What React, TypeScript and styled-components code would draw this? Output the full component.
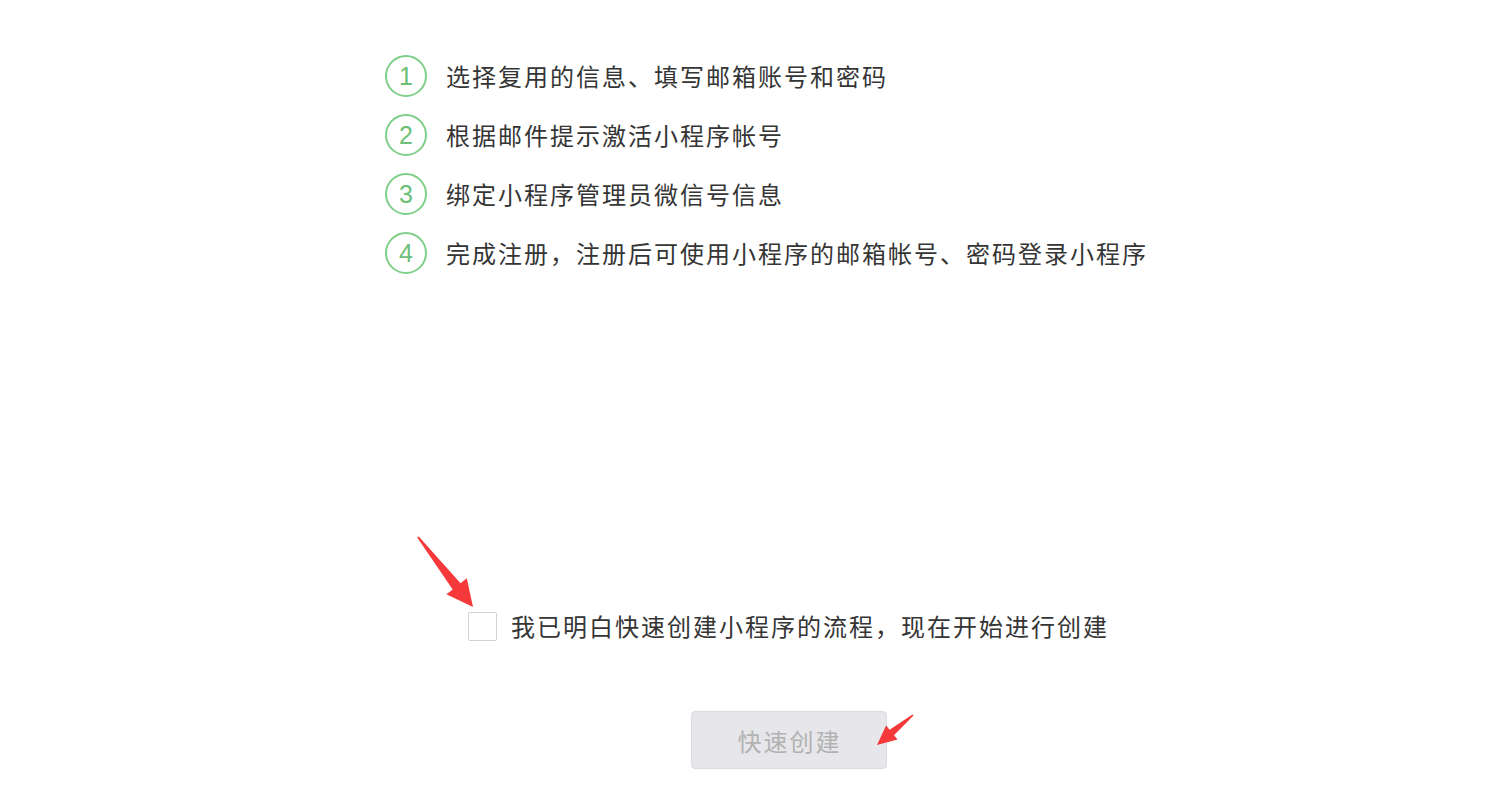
import React from "react";
import styled, { createGlobalStyle } from "styled-components";

const GlobalStyle = createGlobalStyle`
  html, body {
    margin: 0;
    padding: 0;
    background: #fff;
  }
  body {
    font-family: "Noto Sans CJK SC", "Noto Sans", sans-serif;
    color: #353535;
  }
`;

const Page = styled.div`
  position: relative;
  width: 1490px;
  height: 787px;
  overflow: hidden;
  background: #fff;
`;

const Content = styled.div`
  display: flex;
  flex-direction: column;
  width: 805px;
  margin-left: 385px;
  padding-top: 55px;
`;

const Steps = styled.ol`
  list-style: none;
  margin: 0;
  padding: 0;
  display: flex;
  flex-direction: column;
  gap: 17px;
`;

const Step = styled.li`
  display: flex;
  align-items: center;
  gap: 19px;
  height: 42px;
`;

const Num = styled.span`
  display: flex;
  align-items: center;
  justify-content: center;
  box-sizing: border-box;
  width: 42px;
  height: 42px;
  border: 2px solid #7fcf89;
  border-radius: 50%;
  color: #6cbf78;
  font-family: "Liberation Sans", Arial, sans-serif;
  font-size: 25px;
`;

const Label = styled.span`
  font-size: 24px;
  letter-spacing: 2px;
  line-height: 42px;
  color: #353535;
`;

const Agree = styled.label`
  display: flex;
  align-items: center;
  justify-content: center;
  gap: 14px;
  margin-top: 331px;
  padding-left: 2px;
  cursor: pointer;
`;

const Box = styled.span`
  box-sizing: border-box;
  width: 29px;
  height: 29px;
  border: 1px solid #d2d2d2;
  border-radius: 2px;
  background: #fff;
`;

const Actions = styled.div`
  display: flex;
  justify-content: center;
  margin-top: 64px;
  padding-left: 2px;
`;

const Button = styled.button`
  box-sizing: border-box;
  width: 196px;
  height: 58px;
  border: 1px solid #dcdce0;
  border-radius: 4px;
  background: #e7e7eb;
  color: #b2b2b2;
  font-family: "Noto Sans CJK SC", sans-serif;
  font-size: 24px;
  letter-spacing: 2px;
  padding: 0 0 0 2px;
  cursor: not-allowed;
`;

const Arrow = styled.svg<{ $left: number; $top: number }>`
  position: absolute;
  left: ${(p) => p.$left}px;
  top: ${(p) => p.$top}px;
  pointer-events: none;
`;

const steps = [
  "选择复用的信息、填写邮箱账号和密码",
  "根据邮件提示激活小程序帐号",
  "绑定小程序管理员微信号信息",
  "完成注册，注册后可使用小程序的邮箱帐号、密码登录小程序",
];

export default function App() {
  return (
    <Page>
      <GlobalStyle />
      <Content>
        <Steps>
          {steps.map((s, i) => (
            <Step key={i}>
              <Num>{i + 1}</Num>
              <Label>{s}</Label>
            </Step>
          ))}
        </Steps>

        <Agree>
          <Box />
          <Label>我已明白快速创建小程序的流程，现在开始进行创建</Label>
        </Agree>

        <Actions>
          <Button disabled>快速创建</Button>
        </Actions>
      </Content>

      {/* annotation arrows */}
      <Arrow $left={410} $top={530} width={70} height={85} viewBox="410 530 70 85">
        <polygon
          points="417.2,537.6 452.7,589.4 446.4,594.3 473,607 466.8,578.3 460.5,583.2 418.8,536.4"
          fill="#f5393a"
        />
      </Arrow>
      <Arrow $left={870} $top={705} width={50} height={48} viewBox="870 705 50 48">
        <polygon
          points="913.5,715.6 894,735.2 897.5,739.4 877,745 886.1,725.6 889.6,729.8 912.5,714.4"
          fill="#f5393a"
        />
      </Arrow>
    </Page>
  );
}
